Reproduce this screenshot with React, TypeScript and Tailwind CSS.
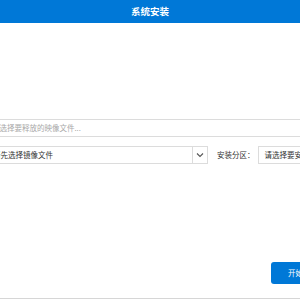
import React from "react";

export default function App() {
  return (
    <div
      className="w-[300px] h-[300px] overflow-hidden bg-white flex flex-col"
      style={{ fontFamily: '"Microsoft YaHei", "Noto Sans CJK SC", "Noto Sans", sans-serif' }}
    >
      <div className="h-[23px] shrink-0 bg-[#0078d7] flex items-center justify-center text-white text-[9.5px] font-bold">
        系统安装
      </div>

      <div className="mt-[96px] -ml-[13px] w-[340px] h-[18px] border border-[#dcdcdc] flex items-center px-[4px] text-[7.5px] text-[#a8a8a8] whitespace-nowrap">
        请选择要释放的映像文件...
      </div>

      <div className="mt-[9px] -ml-[13px] flex items-center whitespace-nowrap">
        <div className="w-[221px] h-[18px] border border-[#dcdcdc] flex items-center shrink-0">
          <div className="flex-1 pl-[5px] text-[7.5px] text-[#333]">请先选择镜像文件</div>
          <div className="w-[15px] h-full border-l border-[#dcdcdc] flex items-center justify-center">
            <svg width="8" height="6" viewBox="0 0 8 6">
              <path d="M1 1.5 L4 4.5 L7 1.5" fill="none" stroke="#555" strokeWidth="1.1" />
            </svg>
          </div>
        </div>
        <div className="ml-[9px] text-[7.5px] text-[#333] shrink-0">安装分区：</div>
        <div className="ml-[3px] w-[100px] h-[18px] border border-[#dcdcdc] flex items-center pl-[6px] text-[7.5px] text-[#333] shrink-0">
          请选择要安装的分区
        </div>
      </div>

      <div className="mt-[98px] flex justify-end -mr-[30px]">
        <div className="w-[59px] h-[22px] rounded-[3px] bg-[#0078d7] flex items-center pl-[17px] text-white text-[7.5px] whitespace-nowrap">
          开始安装
        </div>
      </div>

      <div className="mt-[14px] h-px bg-[#d6d6d6] w-full"></div>
    </div>
  );
}
